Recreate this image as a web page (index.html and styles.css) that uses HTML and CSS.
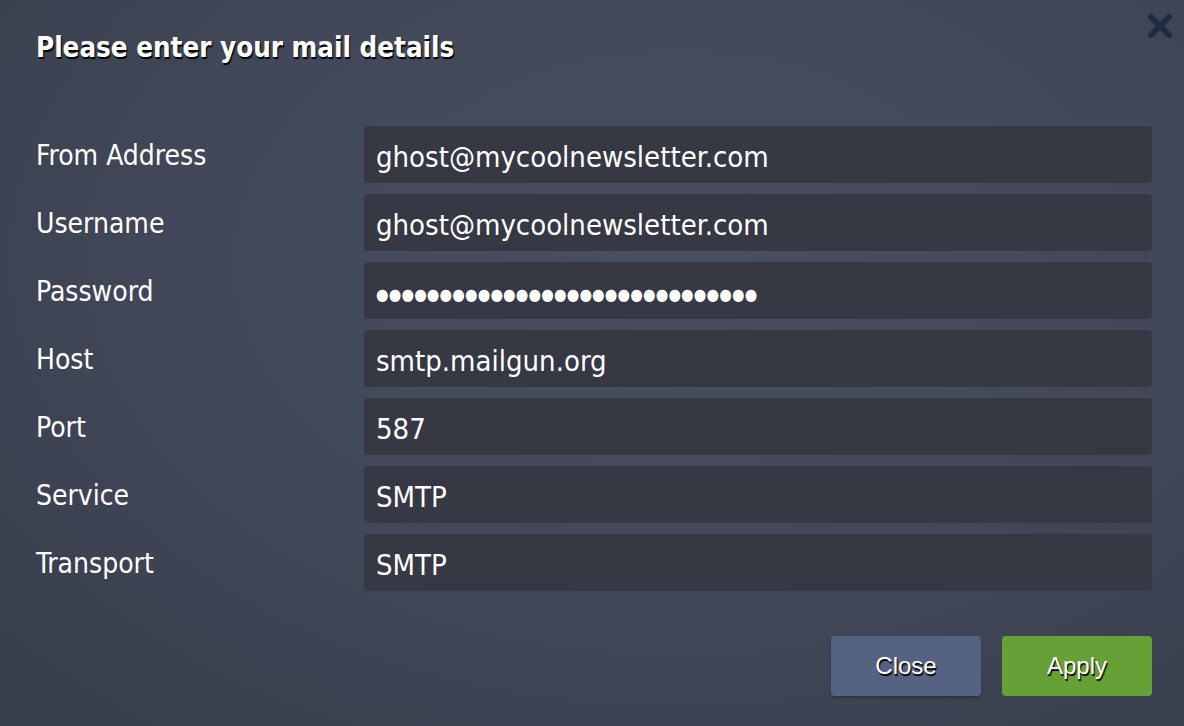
FILE: index.html
```html
<!DOCTYPE html>
<html lang="en">
<head>
    <meta charset="UTF-8">
    <meta name="viewport" content="width=device-width, initial-scale=1.0">
    <title>Mail details</title>
    <link rel="stylesheet" href="styles.css">
</head>
<body>
    <div class="dialog">
        <div class="header">
            <h1>Please enter your mail details</h1>
            <button class="close-x" type="button">
                <svg width="26" height="26" viewBox="0 0 26 26">
                    <path d="M4 4 L22 22 M22 4 L4 22" stroke="#1e2b41" stroke-width="6" stroke-linecap="round"/>
                </svg>
            </button>
        </div>
        <form class="fields">
            <label class="label">From Address</label>
            <input class="field" type="text" value="ghost@mycoolnewsletter.com">
            <label class="label">Username</label>
            <input class="field" type="text" value="ghost@mycoolnewsletter.com">
            <label class="label">Password</label>
            <input class="field field-pass" type="text" value="●●●●●●●●●●●●●●●●●●●●●●●●●●●●●●">
            <label class="label">Host</label>
            <input class="field" type="text" value="smtp.mailgun.org">
            <label class="label">Port</label>
            <input class="field" type="text" value="587">
            <label class="label">Service</label>
            <input class="field" type="text" value="SMTP">
            <label class="label">Transport</label>
            <input class="field" type="text" value="SMTP">
        </form>
        <div class="actions">
            <button class="btn btn-close" type="button">Close</button>
            <button class="btn btn-apply" type="button">Apply</button>
        </div>
    </div>
</body>
</html>
```

FILE: styles.css
```css
html, body{
    margin: 0;
    height: 100%;
}
body{
    background: radial-gradient(ellipse 900px 600px at 680px 260px, #484f61 0%, #424859 55%, #393e4c 100%);
    font-family: "DejaVu Sans Condensed", "DejaVu Sans", sans-serif;
    color: #fff;
}
.dialog{
    padding: 0 32px 0 36px;
}
.header{
    display: flex;
    justify-content: space-between;
    align-items: flex-start;
    height: 126px;
}
.header h1{
    margin: 31px 0 0;
    font-size: 27.5px;
    font-weight: bold;
    line-height: normal;
    text-shadow: 1px 2px 1px #000;
}
.close-x{
    margin: 13px -21px 0 0;
    padding: 0;
    border: 0;
    background: none;
}
.fields{
    display: grid;
    grid-template-columns: 328px 1fr;
    row-gap: 11px;
}
.label{
    font-size: 28px;
    padding-top: 15px;
    line-height: 30px;
}
.field{
    height: 57px;
    box-sizing: border-box;
    border: 0;
    border-radius: 4px;
    background: #363844;
    color: #fff;
    font-family: "DejaVu Sans Condensed", "DejaVu Sans", sans-serif;
    font-size: 29px;
    padding: 5px 12px 0;
    outline: none;
}
.field-pass{
    font-size: 16px;
    letter-spacing: 0.15px;
    padding-top: 8px;
}
.actions{
    display: flex;
    justify-content: flex-end;
    gap: 21px;
    margin-top: 45px;
}
.btn{
    width: 150px;
    height: 60px;
    border: 0;
    border-radius: 4px;
    color: #fff;
    font-family: "Liberation Sans", Arial, sans-serif;
    font-size: 24px;
    text-shadow: 1px 2px 1px #000;
}
.btn-close{
    background: #566282;
    box-shadow: 0 2px 3px rgba(0,0,0,0.25);
}
.btn-apply{
    background: #67a036;
}
```
